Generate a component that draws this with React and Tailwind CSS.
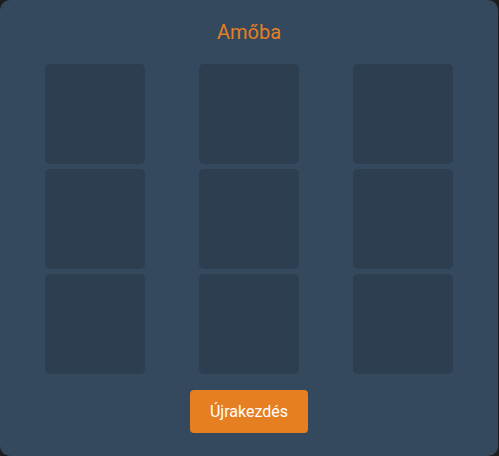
import React, { useState } from "react";

const App = () => {
  const [board, setBoard] = useState(Array(9).fill(null));

  return (
    <div className="min-h-screen bg-[#1e1e1e]" style={{ fontFamily: "Roboto, 'Noto Sans', sans-serif" }}>
      <div className="w-[498px] h-[456px] rounded-[10px] bg-[#34495e] px-5 pt-5 flex flex-col items-center">
        <h2 className="text-[20px] leading-[24px] text-[#e67e22] mb-5">Amőba</h2>
        <div className="grid grid-cols-3 gap-[5px] w-full">
          {board.map((cell, i) => (
            <div key={i} className="flex justify-center">
              <button
                onClick={() => {
                  const next = [...board];
                  next[i] = next[i] ? null : "X";
                  setBoard(next);
                }}
                className="w-[100px] h-[100px] rounded-[5px] bg-[#2c3e50] text-white text-4xl"
              >
                {cell}
              </button>
            </div>
          ))}
        </div>
        <button
          onClick={() => setBoard(Array(9).fill(null))}
          className="mt-4 h-[43px] px-5 rounded bg-[#e67e22] text-white text-base"
        >
          Újrakezdés
        </button>
      </div>
    </div>
  );
};

export default App;
